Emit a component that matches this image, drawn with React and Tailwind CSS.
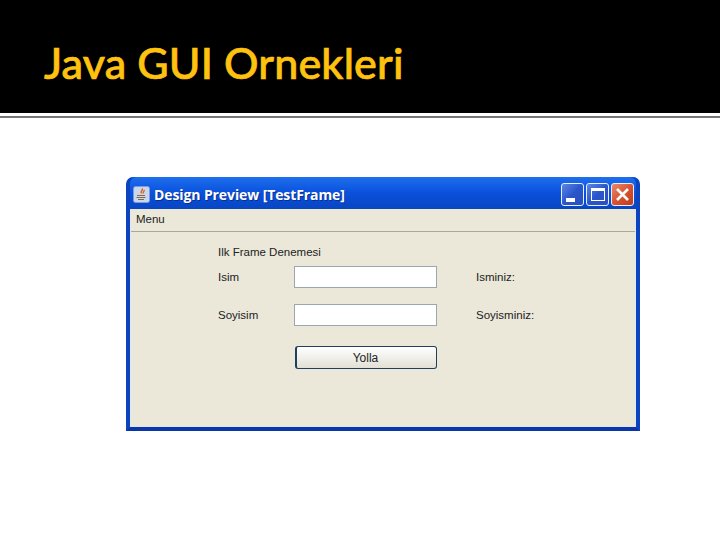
import { useState } from 'react';

function JavaIcon() {
  return (
    <svg width="17" height="17" viewBox="0 0 17 17" className="shrink-0">
      <rect x="0.5" y="0.5" width="16" height="16" rx="2" fill="#c9d6f0" stroke="#7f9ad6" />
      <path d="M9 2.5c2 1.5-2.5 2.5-.5 5M11 4c1 1.5-2 2-.5 3.5" fill="none" stroke="#d8641e" strokeWidth="1.4" />
      <path d="M4 9.5h8M3.5 11.5h9M5 13.5h6" fill="none" stroke="#8a6a3a" strokeWidth="1.2" />
    </svg>
  );
}

function WindowButton({ kind }) {
  const isClose = kind === 'close';
  return (
    <div
      className={`w-[23px] h-[23px] rounded-[3px] border border-[#e6edfb] flex items-center justify-center ${
        isClose
          ? 'bg-gradient-to-br from-[#e58a6c] via-[#d9532f] to-[#bf3a17]'
          : 'bg-gradient-to-br from-[#5f86e4] via-[#2a56cc] to-[#2a4fbe]'
      }`}
    >
      {kind === 'min' && <div className="w-[9px] h-[4px] bg-white mt-[11px] mr-[5px]" />}
      {kind === 'max' && <div className="w-[14px] h-[13px] border border-white border-t-[3px]" />}
      {isClose && (
        <svg width="15" height="15" viewBox="0 0 15 15">
          <path d="M2 2l11 11M13 2L2 13" stroke="#fff" strokeWidth="2.6" />
        </svg>
      )}
    </div>
  );
}

function FormRow({ label, hint, className }) {
  const [value, setValue] = useState('');
  return (
    <div className={`flex items-center h-[22px] ${className}`}>
      <span className="w-[76px] pt-[1px]">{label}</span>
      <input
        type="text"
        value={value}
        onChange={(e) => setValue(e.target.value)}
        className="w-[143px] h-[22px] bg-white border border-[#9aa7ad] outline-none"
      />
      <span className="ml-[39px] pt-[1px]">{hint}</span>
    </div>
  );
}

export default function App() {
  return (
    <div className="w-[720px] h-[540px] bg-white overflow-hidden font-['Liberation_Sans',sans-serif]">
      <header className="h-[113px] bg-black pl-[44px] pt-[35px]">
        <h1 className="font-['Lato',sans-serif] font-medium text-[43px] leading-[56px] tracking-[0.15px] text-[#ffc20e] [-webkit-text-stroke:0.7px_#ffc20e]">
          Java GUI Ornekleri
        </h1>
      </header>
      <div className="h-[2px] mt-[3px] bg-[#777]" />

      <div className="ml-[126px] mt-[59px] w-[514px] h-[254px] flex flex-col rounded-t-[7px] bg-[#0a4fd6] border-x-4 border-b-4 border-b-[#0a36a8] border-x-[#0c44bf]">
        <div className="h-[32px] shrink-0 flex items-center pt-[2px] pl-[3px] pr-[2px] bg-gradient-to-b from-[#1f6fee] via-[#0a50dc] to-[#0846c2] rounded-t-[7px]">
          <JavaIcon />
          <span className="ml-[4px] text-white font-['Open_Sans',sans-serif] font-bold text-[14px] tracking-[-0.1px] [text-shadow:1px_1px_0_#0a2f8f]">
            Design Preview [TestFrame]
          </span>
          <div className="ml-auto flex gap-[2px]">
            <WindowButton kind="min" />
            <WindowButton kind="max" />
            <WindowButton kind="close" />
          </div>
        </div>

        <div className="flex-1 bg-[#ebe8da] text-[11.5px] text-[#222] border-l border-r border-b border-[#dce8f8]">
          <div className="h-[23px] flex items-center pl-[5px] border-b border-[#a9a89c]">Menu</div>
          <div className="pl-[87px] pt-[13px]">
            <div className="h-[15px] leading-[15px]">Ilk Frame Denemesi</div>
            <FormRow label="Isim" hint="Isminiz:" className="mt-[6px]" />
            <FormRow label="Soyisim" hint="Soyisminiz:" className="mt-[16px]" />
            <button className="ml-[77px] mt-[20px] w-[142px] h-[23px] block rounded-[3px] border border-[#1f3f5f] border-l-2 pr-[2px] bg-gradient-to-b from-white to-[#e2e0d6] text-[12px] text-[#222]">
              Yolla
            </button>
          </div>
        </div>
      </div>
    </div>
  );
}
